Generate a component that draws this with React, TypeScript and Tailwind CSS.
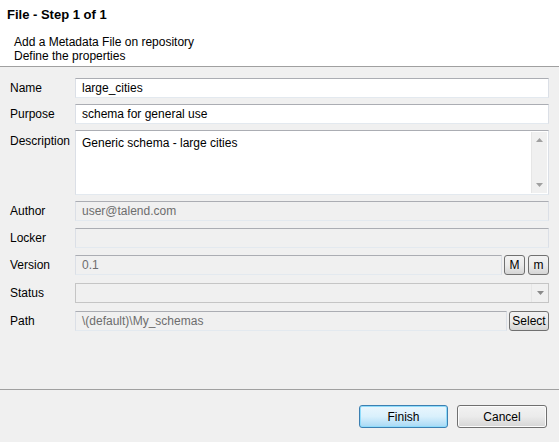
const field = 'h-5 border border-[#abadb3] border-t-[#abadb3] border-x-[#dbdfe6] border-b-[#e3e9ef] px-[6px] flex items-center'

function Label({ children, top }: { children: React.ReactNode; top?: boolean }) {
  return (
    <div className={`w-[65px] shrink-0 text-[12px] text-black ${top ? 'pt-[2px]' : 'flex items-center'}`}>
      {children}
    </div>
  )
}

function TextRow({ label, value, disabled, className = '' }: { label: string; value: string; disabled?: boolean; className?: string }) {
  return (
    <div className={`flex h-5 ${className}`}>
      <Label>{label}</Label>
      <div
        className={`${field} flex-1 ${disabled ? 'bg-[#f0f0f0] border-[#c5c5c5] text-[#6d6d6d]' : 'bg-white text-black'}`}
      >
        {value}
      </div>
    </div>
  )
}

function SmallButton({ children, className = '' }: { children: React.ReactNode; className?: string }) {
  return (
    <div
      className={`h-5 ml-[2px] rounded-[3px] border border-[#707070] bg-gradient-to-b from-[#f2f2f2] via-[#ebebeb] to-[#d5d5d5] flex items-center justify-center text-[12px] text-black ${className}`}
    >
      {children}
    </div>
  )
}

export default function App() {
  return (
    <div
      className="h-[442px] w-[559px] flex flex-col bg-[#f0f0f0] text-[12px] overflow-hidden"
      style={{ fontFamily: '"Liberation Sans", Arial, sans-serif' }}
    >
      {/* Header */}
      <div className="h-[67px] bg-white border-b border-[#a0a0a0] shrink-0">
        <div className="pl-[7px] pt-[7px] font-bold text-[13px] leading-[16px] text-black">File - Step 1 of 1</div>
        <div className="pl-[14px] pt-[12px] leading-[14px] text-black">
          <div>Add a Metadata File on repository</div>
          <div>Define the properties</div>
        </div>
      </div>

      {/* Form */}
      <div className="flex-1 pl-[10px] pr-[10px] pt-[11px]">
        <TextRow label="Name" value="large_cities" />
        <TextRow label="Purpose" value="schema for general use" className="mt-[6px]" />

        <div className="flex mt-[6px] h-[65px]">
          <Label top>Description</Label>
          <div className="flex-1 flex bg-white border border-t-[#abadb3] border-x-[#dbdfe6] border-b-[#e3e9ef]">
            <div className="flex-1 px-[6px] pt-[3px] text-black">Generic schema - large cities</div>
            <div className="w-[16px] m-[1px] bg-[#f0f0f0] border-l border-[#e6e6e6] flex flex-col justify-between items-center py-[6px]">
              <svg width="7" height="4" viewBox="0 0 7 4">
                <path d="M3.5 0L7 4H0z" fill="#a0a0a0" />
              </svg>
              <svg width="7" height="4" viewBox="0 0 7 4">
                <path d="M0 0h7L3.5 4z" fill="#a0a0a0" />
              </svg>
            </div>
          </div>
        </div>

        <TextRow label="Author" value="user@talend.com" disabled className="mt-[6px]" />
        <TextRow label="Locker" value="" disabled className="mt-[7px]" />

        <div className="flex h-5 mt-[7px]">
          <Label>Version</Label>
          <div className={`${field} flex-1 bg-[#f0f0f0] border-[#c5c5c5] text-[#6d6d6d]`}>0.1</div>
          <SmallButton className="w-[21px]">M</SmallButton>
          <SmallButton className="w-[21px] ml-[3px]">m</SmallButton>
        </div>

        <div className="flex h-5 mt-[8px]">
          <Label>Status</Label>
          <div className="flex-1 flex border border-[#c5c5c5] bg-[#f0f0f0]">
            <div className="flex-1" />
            <div className="w-[17px] border-l border-[#e6e6e6] flex items-center justify-center">
              <svg width="7" height="4" viewBox="0 0 7 4">
                <path d="M0 0h7L3.5 4z" fill="#8a8a8a" />
              </svg>
            </div>
          </div>
        </div>

        <div className="flex h-5 mt-[8px]">
          <Label>Path</Label>
          <div className={`${field} flex-1 bg-[#f0f0f0] border-[#c5c5c5] text-[#6d6d6d]`}>\(default)\My_schemas</div>
          <SmallButton className="w-[40px] ml-[2px]">Select</SmallButton>
        </div>
      </div>

      {/* Footer */}
      <div className="h-[53px] shrink-0 border-t border-[#a0a0a0] flex justify-end items-start pt-[15px] pr-[12px] gap-[9px]">
        <div className="w-[89px] h-[23px] rounded-[3px] border border-[#3c7fb1] bg-gradient-to-b from-[#eaf6fd] via-[#d9f0fc] to-[#a7d9f5] shadow-[inset_0_0_0_1px_#8fdcfb] flex items-center justify-center text-black">
          Finish
        </div>
        <div className="w-[90px] h-[23px] rounded-[3px] border border-[#707070] bg-gradient-to-b from-[#f2f2f2] via-[#ebebeb] to-[#d5d5d5] shadow-[inset_0_0_0_1px_#fcfcfc] flex items-center justify-center text-black">
          Cancel
        </div>
      </div>
    </div>
  )
}
